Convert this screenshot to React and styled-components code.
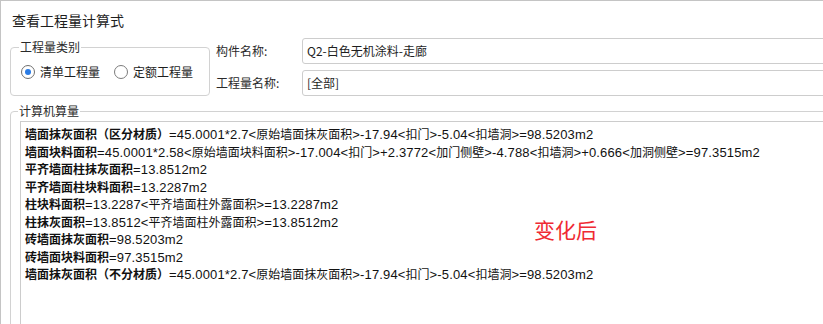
import React from "react";
import styled, { createGlobalStyle } from "styled-components";

const GlobalStyle = createGlobalStyle`
  html, body {
    margin: 0;
    padding: 0;
    background: #ffffff;
    overflow: hidden;
  }
  body {
    font-family: "Noto Sans CJK SC", "Microsoft YaHei", sans-serif;
    color: #1e1e1e;
  }
`;

const Window = styled.div`
  width: 823px;
  height: 324px;
  box-sizing: border-box;
  border-top: 1px solid #c4c4c4;
  border-left: 1px solid #c4c4c4;
  overflow: hidden;
  background: #fff;
`;

const Title = styled.div`
  padding: 9px 0 0 11px;
  height: 20px;
  line-height: 20px;
  font-size: 14px;
`;

const TopRow = styled.div`
  display: flex;
  align-items: flex-start;
  padding-left: 9px;
  gap: 6px;
`;

const GroupBox = styled.fieldset`
  box-sizing: border-box;
  flex-shrink: 0;
  margin: ${(p) => p.$mt || 0}px 0 0 0;
  padding: ${(p) => p.$pt || 0}px 0 0 ${(p) => p.$pl || 0}px;
  width: ${(p) => p.$w}px;
  height: ${(p) => p.$h}px;
  border: 1px solid #d2d2d2;
  border-radius: 4px;
  min-width: 0;
`;

const Legend = styled.legend`
  font-size: 12px;
  line-height: 16px;
  padding: 0 1px;
  margin-left: ${(p) => p.$ml || 0}px;
  color: #2a2a2a;
`;

const RadioRow = styled.div`
  display: flex;
  align-items: center;
  height: 16px;
`;

const RadioItem = styled.label`
  display: flex;
  align-items: center;
  flex-shrink: 0;
  gap: 5px;
  font-size: 12px;
  line-height: 16px;
  margin-right: 14px;
  white-space: nowrap;
`;

const RadioCircle = styled.span`
  box-sizing: border-box;
  flex-shrink: 0;
  width: 14px;
  height: 14px;
  border-radius: 50%;
  border: 1px solid ${(p) => (p.$checked ? "#6f6f6f" : "#7c7c7c")};
  display: flex;
  align-items: center;
  justify-content: center;
  background: #fff;
  &::after {
    content: "";
    width: 6px;
    height: 6px;
    border-radius: 50%;
    background: ${(p) => (p.$checked ? "#2a7be4" : "transparent")};
  }
`;

const Form = styled.div`
  display: grid;
  flex-shrink: 0;
  grid-template-columns: 86px 540px;
  row-gap: 6px;
  margin-top: 8px;
  align-items: center;
`;

const FieldLabel = styled.div`
  font-size: 12px;
  line-height: 26px;
  color: #2a2a2a;
  white-space: nowrap;
`;

const Field = styled.div`
  box-sizing: border-box;
  height: 26px;
  border: 1px solid #cdcdcd;
  border-radius: 3px;
  padding-left: 4px;
  font-size: 12px;
  line-height: 24px;
  color: #1e1e1e;
`;

const Output = styled.div`
  position: relative;
  box-sizing: border-box;
  width: 840px;
  height: 220px;
  border-top: 1px solid #cccccc;
  border-left: 1px solid #cccccc;
  padding: 3px 0 0 4px;
`;

const Line = styled.div`
  font-family: "Liberation Sans", "Noto Sans CJK SC", sans-serif;
  font-size: 13px;
  letter-spacing: 0.15px;
  line-height: 17.5px;
  height: 17.5px;
  white-space: nowrap;
  color: #111;
  b {
    font-weight: 700;
  }
`;

const Cjk = styled.span`
  font-family: "Noto Sans CJK SC", sans-serif;
  font-size: 12px;
  letter-spacing: 0;
`;

const Note = styled.div`
  position: absolute;
  left: 513px;
  top: 94px;
  font-size: 21px;
  line-height: 26px;
  color: #ef2a33;
`;

const lines = [
  ["墙面抹灰面积（区分材质）", "=45.0001*2.7<原始墙面抹灰面积>-17.94<扣门>-5.04<扣墙洞>=98.5203m2"],
  ["墙面块料面积", "=45.0001*2.58<原始墙面块料面积>-17.004<扣门>+2.3772<加门侧壁>-4.788<扣墙洞>+0.666<加洞侧壁>=97.3515m2"],
  ["平齐墙面柱抹灰面积", "=13.8512m2"],
  ["平齐墙面柱块料面积", "=13.2287m2"],
  ["柱块料面积", "=13.2287<平齐墙面柱外露面积>=13.2287m2"],
  ["柱抹灰面积", "=13.8512<平齐墙面柱外露面积>=13.8512m2"],
  ["砖墙面抹灰面积", "=98.5203m2"],
  ["砖墙面块料面积", "=97.3515m2"],
  ["墙面抹灰面积（不分材质）", "=45.0001*2.7<原始墙面抹灰面积>-17.94<扣门>-5.04<扣墙洞>=98.5203m2"],
];

// latin runs and chinese runs use different sizes, like the original UI font
const splitRuns = (text) =>
  text
    .split(/([\u4e00-\u9fff（）]+)/)
    .filter(Boolean)
    .map((part, i) =>
      /[\u4e00-\u9fff（）]/.test(part) ? <Cjk key={i}>{part}</Cjk> : part
    );

export default function App() {
  return (
    <>
      <GlobalStyle />
      <Window>
        <Title>查看工程量计算式</Title>
        <TopRow>
          <GroupBox $w={200} $h={57} $mt={9} $pt={9} $pl={10}>
            <Legend $ml={-2}>工程量类别</Legend>
            <RadioRow>
              <RadioItem>
                <RadioCircle $checked />
                清单工程量
              </RadioItem>
              <RadioItem>
                <RadioCircle />
                定额工程量
              </RadioItem>
            </RadioRow>
          </GroupBox>
          <Form>
            <FieldLabel>构件名称:</FieldLabel>
            <Field>Q2-白色无机涂料-走廊</Field>
            <FieldLabel>工程量名称:</FieldLabel>
            <Field>[全部]</Field>
          </Form>
        </TopRow>
        <TopRow>
          <GroupBox $w={860} $h={260} $mt={7} $pt={2} $pl={9}>
            <Legend $ml={-2}>计算机算量</Legend>
            <Output>
              {lines.map(([label, expr], i) => (
                <Line key={i}>
                  <b>
                    <Cjk>{label}</Cjk>
                  </b>
                  {splitRuns(expr)}
                </Line>
              ))}
              <Note>变化后</Note>
            </Output>
          </GroupBox>
        </TopRow>
      </Window>
    </>
  );
}
